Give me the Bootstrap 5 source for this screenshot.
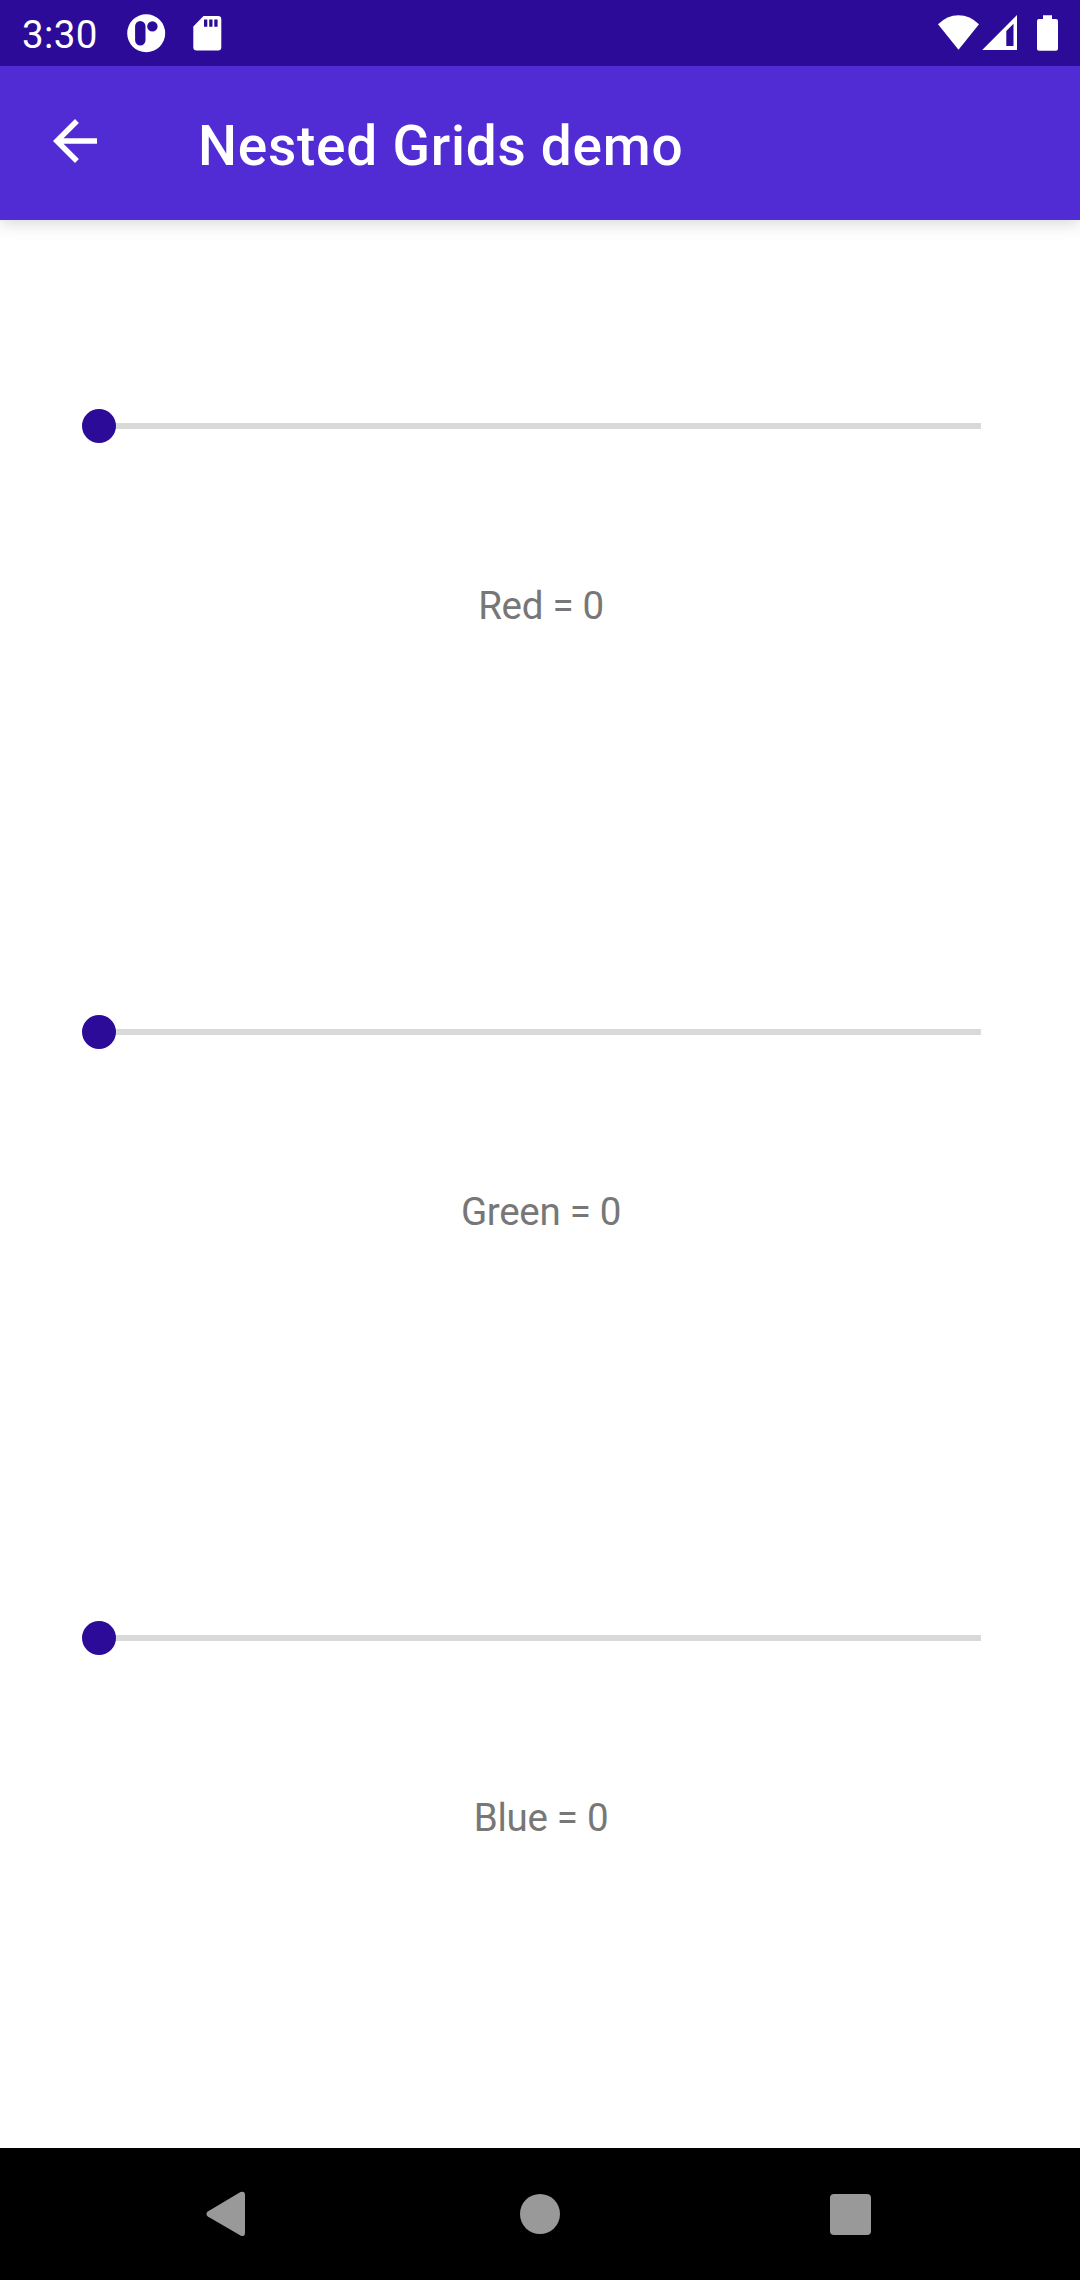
<!DOCTYPE html>
<html lang="en">
<head>
<meta charset="utf-8">
<meta name="viewport" content="width=device-width, initial-scale=1">
<title>Nested Grids demo</title>
<link href="https://cdn.jsdelivr.net/npm/bootstrap@5.3.0/dist/css/bootstrap.min.css" rel="stylesheet">
<style>
  body { font-family: Roboto, "Liberation Sans", sans-serif; background: #fff; }
  svg { display: block; flex: none; }
  .screen { width: 1080px; height: 2280px; }
  .status-bar { height: 66px; background: #2b0b98; }
  .clock { font-size: 38.5px; line-height: 66px; padding: 2px 0 0 22px; width: 127px; height: 66px; letter-spacing: .4px; }
  .app-bar { height: 154px; background: #512bd4; padding: 0 0 0 42px; box-shadow: 0 3px 16px rgba(0,0,0,.17); clip-path: inset(0 0 -24px 0); }
  .back-btn { margin-top: -4px; }
  .app-title { font-size: 55px; font-weight: 500; line-height: 64px; margin: 6px 0 0 90px; letter-spacing: .75px; }
  .sliders { padding: 116px 99px 0 82px; gap: 246px; }
  .cell { height: 180px; }
  .channel { font-size: 38.5px; line-height: 46px; color: #777; margin-left: 19px; letter-spacing: -.3px; }
  .form-range.color-range { height: 34px; }
  .color-range::-webkit-slider-runnable-track { height: 6px; background: #d9d9d9; border-radius: 0; }
  .color-range::-webkit-slider-thumb { width: 34px; height: 34px; margin-top: -14px; background: #2b0b98; border-radius: 50%; }
  .nav-keys { height: 132px; background: #000; padding: 0 209px 0 206px; }
  .home-key { margin-left: 4px; }
</style>
<script src="https://cdn.jsdelivr.net/npm/bootstrap@5.3.0/dist/js/bootstrap.bundle.min.js"></script>
</head>
<body>
<div class="screen d-flex flex-column overflow-hidden">
  <div class="status-bar d-flex justify-content-between text-white">
    <div class="d-flex">
      <div class="clock">3:30</div>
      <svg width="101" height="66" viewBox="127 0 101 66" fill="#fff">
        <path fill-rule="evenodd" d="M146.2 14.2a19 19 0 1 1 0 38a19 19 0 0 1 0-38zM140.3 21a5.2 5.2 0 0 0-5.2 5.2v14a5.2 5.2 0 0 0 10.4 0v-14a5.2 5.2 0 0 0-5.2-5.2zM152.4 21.2a5.2 5.2 0 1 0 0 10.4a5.2 5.2 0 0 0 0-10.4z"/>
        <path fill-rule="evenodd" d="M203.5 16H218q3.3 0 3.3 3.3v28q0 3.3-3.3 3.3h-21.3q-3.4 0-3.4-3.3V26.500zM204 19.500v7.200h3.300v-7.200zM209.200 19.500v7.200h3.300v-7.200zM214.300 19.500v7.200h3.300v-7.200z"/>
      </svg>
    </div>
    <svg width="150" height="66" viewBox="930 0 150 66" fill="#fff">
      <path d="M938 24.300Q947 15.200 958.500 15.200T979 24.300L958.500 49.700z"/>
      <path fill-rule="evenodd" d="M982.200 50L1017 15v35zM1006.300 31v15h7.200V23.800z"/>
      <path d="M1043 15.200h9V19h4q2 0 2 2v27.700q0 2-2 2h-17q-2 0-2-2V21q0-2 2-2h4z"/>
    </svg>
  </div>

  <header class="app-bar d-flex align-items-center text-white">
    <svg class="back-btn" width="66" height="66" viewBox="0 0 24 24" fill="#fff"><path d="M20 11H7.830l5.590-5.590L12 4l-8 8 8 8 1.410-1.410L7.830 13H20z"/></svg>
    <h1 class="app-title">Nested Grids demo</h1>
  </header>

  <main class="sliders d-flex flex-column flex-grow-1">
    <section>
      <div class="cell d-flex align-items-center"><input type="range" class="form-range color-range" min="0" max="255" value="0" aria-label="Red"></div>
      <div class="cell d-flex align-items-center justify-content-center"><span class="channel">Red = 0</span></div>
    </section>
    <section>
      <div class="cell d-flex align-items-center"><input type="range" class="form-range color-range" min="0" max="255" value="0" aria-label="Green"></div>
      <div class="cell d-flex align-items-center justify-content-center"><span class="channel">Green = 0</span></div>
    </section>
    <section>
      <div class="cell d-flex align-items-center"><input type="range" class="form-range color-range" min="0" max="255" value="0" aria-label="Blue"></div>
      <div class="cell d-flex align-items-center justify-content-center"><span class="channel">Blue = 0</span></div>
    </section>
  </main>

  <nav class="nav-keys d-flex align-items-center justify-content-between">
    <svg width="39" height="46" viewBox="0 0 39 46" fill="#999"><path d="M1.800 20.500L34.500 1Q39-.500 39 4V41.500Q39 46.500 34.500 44.500L1.800 25.500Q-1 23 1.800 20.500z"/></svg>
    <svg class="home-key" width="40" height="40" viewBox="0 0 40 40" fill="#999"><circle cx="20" cy="20" r="20"/></svg>
    <svg width="41" height="41" viewBox="0 0 41 41" fill="#999"><rect width="41" height="41" rx="4"/></svg>
  </nav>
</div>
</body>
</html>
